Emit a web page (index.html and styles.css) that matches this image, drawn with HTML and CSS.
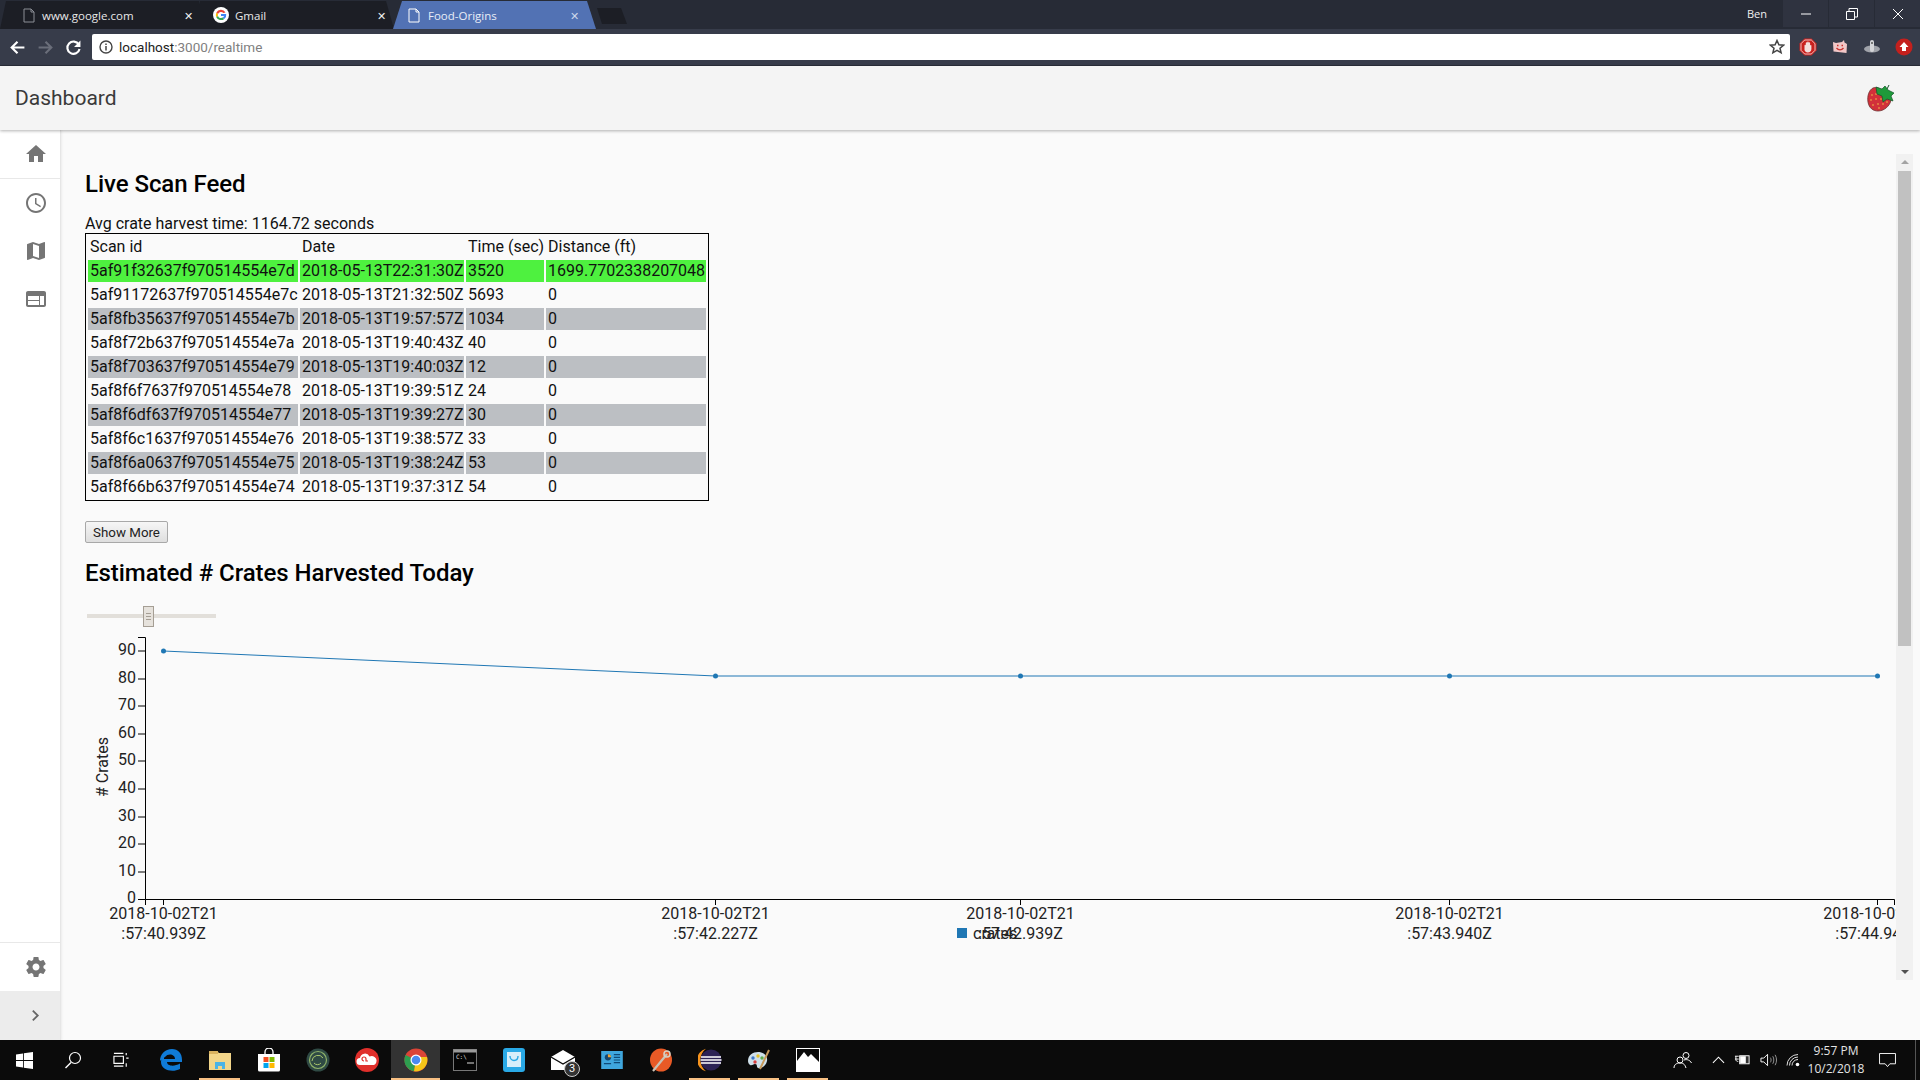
FILE: index.html
```html
<!DOCTYPE html>
<html lang="en">
<head>
  <meta charset="UTF-8">
  <title>Food-Origins</title>
  <link rel="stylesheet" href="styles.css">
</head>
<body>
  <div class="tabstrip">
    <div class="tab tab-first">
      <svg class="tab-icon" viewBox="0 0 12 15"><path d="M1 1h7l3 3v10H1zM8 1v3h3" fill="none" stroke="#8b8e96"/></svg>
      <span class="tab-title">www.google.com</span>
      <span class="tab-close">✕</span>
    </div>
    <div class="tab tab-gmail">
      <svg class="tab-icon-g" viewBox="0 0 16 16">
        <circle cx="8" cy="8" r="8" fill="#fff"/>
        <path d="M12.5 5.4A5.2 5.2 0 0 0 3.3 5.8L5 7.1a3.2 3.2 0 0 1 5.4-1z" fill="#ea4335"/>
        <path d="M3.3 5.8a5.2 5.2 0 0 0 0 4.4L5 8.9a3.2 3.2 0 0 1 0-1.8z" fill="#fbbc05"/>
        <path d="M3.3 10.2a5.2 5.2 0 0 0 8 1.7L9.7 10.600A3.200 3.200 0 0 1 5 8.900z" fill="#34a853"/>
        <path d="M13.200 7H8v2h3a2.500 2.500 0 0 1-1.300 1.600l1.600 1.300A5 5 0 0 0 13.200 7z" fill="#4285f4"/>
      </svg>
      <span class="tab-title">Gmail</span>
      <span class="tab-close">✕</span>
    </div>
    <div class="tab tab-active">
      <svg class="tab-icon" viewBox="0 0 12 15"><path d="M1 1h7l3 3v10H1zM8 1v3h3" fill="none" stroke="#fff"/></svg>
      <span class="tab-title">Food-Origins</span>
      <span class="tab-close">✕</span>
    </div>
    <div class="tab-new"></div>
    <div class="tabstrip-fill"></div>
    <span class="profile">Ben</span>
    <div class="winbtns">
      <div class="winbtn"><svg viewBox="0 0 12 12" width="12" height="12"><path d="M1 6h10" stroke="#fff"/></svg></div>
      <div class="winbtn"><svg viewBox="0 0 12 12" width="12" height="12"><path d="M.5 3.500h8v8h-8zM3 3.500V.5h8.500V9H8.500" fill="none" stroke="#fff"/></svg></div>
      <div class="winbtn"><svg viewBox="0 0 12 12" width="12" height="12"><path d="M1 1l10 10M11 1L1 11" stroke="#fff"/></svg></div>
    </div>
  </div>

  <div class="toolbar">
    <svg class="nav-icon" viewBox="0 0 16 16"><path d="M14.500 8H3M8 2.500L2.500 8 8 13.500" fill="none" stroke="#fff" stroke-width="2"/></svg>
    <svg class="nav-icon" viewBox="0 0 16 16"><path d="M1.500 8H13M8 2.500L13.500 8 8 13.500" fill="none" stroke="#6a6e7a" stroke-width="2"/></svg>
    <svg class="nav-icon" viewBox="0 0 16 16"><path d="M13 5.200A5.800 5.800 0 1 0 13.700 9.500" fill="none" stroke="#fff" stroke-width="2"/><path d="M14.500 1.500v6h-6z" fill="#fff"/></svg>
    <div class="urlbar">
      <svg class="info-icon" viewBox="0 0 14 14"><circle cx="7" cy="7" r="6" fill="none" stroke="#444" stroke-width="1.400"/><path d="M7 6v4.500M7 3.500v1.500" stroke="#444" stroke-width="1.500"/></svg>
      <span class="url-host">localhost</span><span class="url-rest">:3000/realtime</span>
      <svg class="star-icon" viewBox="0 0 16 16"><path d="M8 1.500l1.900 4.300 4.600.4-3.500 3 1.100 4.600L8 11.400l-4.100 2.400L5 9.200l-3.500-3 4.600-.4z" fill="none" stroke="#444" stroke-width="1.500"/></svg>
    </div>
    <div class="extensions">
      <svg class="ext" viewBox="0 0 18 18"><path d="M5.500.5h7L17.500 5.500v7L12.500 17.500h-7L.5 12.500v-7z" fill="#c9211e"/><path d="M5.700 2h6.600L16 5.700v6.600L12.300 16H5.700L2 12.300V5.700z" fill="none" stroke="#f6e4e2" stroke-width=".8"/><path d="M5.500 12V7.500c0-1 1.300-1 1.300 0V5c0-1 1.400-1 1.400 0v-.8c0-1 1.500-1 1.500 0V5c0-1 1.400-1 1.400 0v2.500c0-.8 1.300-.8 1.300 0V11c0 2-1.500 3.500-3.500 3.500H8.500C7 14.500 6 13.500 5.500 12z" fill="#f3dfdc"/></svg>
      <svg class="ext" viewBox="0 0 18 18"><path d="M2 4l3 1 6-1 2-2 .5 2.500L16 6l-.5 9-13-1.500z" fill="#f2c7c7"/><path d="M6 7.500h1.500M10.500 7.500H12M5.500 10c2 2.500 5 2.500 7 0" fill="none" stroke="#c9302c" stroke-width="1.300"/></svg>
      <svg class="ext" viewBox="0 0 18 18"><ellipse cx="9" cy="11" rx="8" ry="3.500" fill="#a0a3aa"/><rect x="7" y="2" width="4" height="12" rx="2" fill="#d4d5d8"/><circle cx="9" cy="5" r="1" fill="#555"/></svg>
      <svg class="ext" viewBox="0 0 18 18"><circle cx="9" cy="9" r="8.500" fill="#c4201d"/><path d="M9 4l4.500 5H11v4H7V9H4.500z" fill="#fff"/></svg>
    </div>
  </div>

  <header class="appbar">
    <h1>Dashboard</h1>
    <svg class="berry" viewBox="0 0 28 28">
      <path d="M6 4C2 6 0 12 1 18c1 6 5 9 10 9 6 0 12-5 13-11L14 6C11 3 8 3 6 4z" fill="#d2303a" stroke="#6a3030" stroke-width=".8"/>
      <g fill="#f2c14a">
        <circle cx="5" cy="11" r=".8"/><circle cx="9" cy="10" r=".8"/><circle cx="4" cy="16" r=".8"/><circle cx="9" cy="15" r=".8"/>
        <circle cx="14" cy="15" r=".8"/><circle cx="6" cy="21" r=".8"/><circle cx="11" cy="20" r=".8"/><circle cx="16" cy="20" r=".8"/><circle cx="12" cy="24" r=".8"/><circle cx="20" cy="18" r=".8"/>
      </g>
      <path d="M9 3l6 2 3-3 3 4 6 3-3 3 2 5-6-2-4 3-1-6-5-2z" fill="#1f9a3a" stroke="#14552a" stroke-width=".7"/>
      <path d="M20 5l2-4" stroke="#14552a" stroke-width="1"/>
    </svg>
  </header>

  <div class="main">
    <nav class="sidebar">
      <a class="side-item side-home">
        <svg viewBox="0 0 24 24"><path d="M10 20v-6h4v6h5v-8h3L12 3 2 12h3v8z"/></svg>
      </a>
      <a class="side-item">
        <svg viewBox="0 0 24 24"><path d="M11.990 2C6.470 2 2 6.480 2 12s4.470 10 9.990 10C17.520 22 22 17.520 22 12S17.520 2 11.990 2zM12 20c-4.420 0-8-3.580-8-8s3.580-8 8-8 8 3.580 8 8-3.580 8-8 8zm.5-13H11v6l5.250 3.150.75-1.230-4.500-2.670z"/></svg>
      </a>
      <a class="side-item">
        <svg viewBox="0 0 24 24"><path d="M20.500 3l-.16.03L15 5.100 9 3 3.360 4.900c-.21.07-.36.25-.36.48V20.500c0 .28.22.5.5.5l.16-.03L9 18.900l6 2.100 5.640-1.900c.21-.07.36-.25.36-.48V3.500c0-.28-.22-.5-.5-.5zM15 19l-6-2.110V5l6 2.110V19z"/></svg>
      </a>
      <a class="side-item">
        <svg viewBox="0 0 24 24"><path d="M20 4H4c-1.100 0-2 .9-2 2v12c0 1.100.9 2 2 2h16c1.100 0 2-.9 2-2V6c0-1.100-.9-2-2-2zm-5 14H4v-4h11v4zm0-5H4V9h11v4zm5 5h-4V9h4v9z"/></svg>
      </a>
      <div class="side-fill"></div>
      <a class="side-item side-gear">
        <svg viewBox="0 0 24 24"><path d="M19.430 12.980c.04-.32.07-.64.07-.98s-.03-.66-.07-.98l2.110-1.650c.19-.15.24-.42.12-.64l-2-3.460c-.12-.22-.39-.3-.61-.22l-2.490 1c-.52-.4-1.080-.73-1.690-.98l-.38-2.650C14.460 2.180 14.250 2 14 2h-4c-.25 0-.46.18-.49.42l-.38 2.650c-.61.25-1.170.59-1.690.98l-2.490-1c-.23-.09-.49 0-.61.22l-2 3.460c-.13.22-.07.49.12.64l2.110 1.650c-.04.32-.07.65-.07.98s.03.66.07.98l-2.110 1.650c-.19.15-.24.42-.12.64l2 3.460c.12.22.39.3.61.22l2.490-1c.52.4 1.080.73 1.690.98l.38 2.650c.03.24.24.42.49.42h4c.25 0 .46-.18.49-.42l.38-2.650c.61-.25 1.170-.59 1.690-.98l2.490 1c.23.09.49 0 .61-.22l2-3.460c.12-.22.07-.49-.12-.64l-2.110-1.650zM12 15.500c-1.930 0-3.500-1.570-3.500-3.500s1.570-3.500 3.500-3.500 3.500 1.570 3.500 3.500-1.570 3.500-3.500 3.500z"/></svg>
      </a>
      <a class="side-expand">
        <svg viewBox="0 0 10 14" width="9" height="13"><path d="M2 1.500L7.500 7 2 12.500" fill="none" stroke="#666" stroke-width="2"/></svg>
      </a>
    </nav>

    <section class="content">
      <div class="scroller">
        <div class="page">
          <h2 class="title-feed">Live Scan Feed</h2>
          <p class="avg">Avg crate harvest time: 1164.72 seconds</p>
          <table class="scans">
            <colgroup>
              <col class="col-id"><col class="col-date"><col class="col-time"><col class="col-dist">
            </colgroup>
            <thead>
              <tr><th>Scan id</th><th>Date</th><th>Time (sec)</th><th>Distance (ft)</th></tr>
            </thead>
            <tbody>
              <tr class="latest"><td>5af91f32637f970514554e7d</td><td>2018-05-13T22:31:30Z</td><td>3520</td><td>1699.7702338207048</td></tr>
              <tr><td>5af91172637f970514554e7c</td><td>2018-05-13T21:32:50Z</td><td>5693</td><td>0</td></tr>
              <tr class="odd"><td>5af8fb35637f970514554e7b</td><td>2018-05-13T19:57:57Z</td><td>1034</td><td>0</td></tr>
              <tr><td>5af8f72b637f970514554e7a</td><td>2018-05-13T19:40:43Z</td><td>40</td><td>0</td></tr>
              <tr class="odd"><td>5af8f703637f970514554e79</td><td>2018-05-13T19:40:03Z</td><td>12</td><td>0</td></tr>
              <tr><td>5af8f6f7637f970514554e78</td><td>2018-05-13T19:39:51Z</td><td>24</td><td>0</td></tr>
              <tr class="odd"><td>5af8f6df637f970514554e77</td><td>2018-05-13T19:39:27Z</td><td>30</td><td>0</td></tr>
              <tr><td>5af8f6c1637f970514554e76</td><td>2018-05-13T19:38:57Z</td><td>33</td><td>0</td></tr>
              <tr class="odd"><td>5af8f6a0637f970514554e75</td><td>2018-05-13T19:38:24Z</td><td>53</td><td>0</td></tr>
              <tr><td>5af8f66b637f970514554e74</td><td>2018-05-13T19:37:31Z</td><td>54</td><td>0</td></tr>
            </tbody>
          </table>
          <button class="show-more">Show More</button>
          <h2 class="title-crates">Estimated # Crates Harvested Today</h2>
          <div class="slider">
            <div class="slider-handle"><span></span><span></span><span></span></div>
          </div>
          <!-- svg origin is page x 85, y 630 -->
          <svg class="chart" width="1811" height="320" viewBox="85 630 1811 320">
            <g class="axis">
              <path d="M138 636.500H145.500V898.500H138M145.500 904V898.500H1894.500V904" fill="none"/>
              <path d="M138 650H145M138 678H145M138 705H145M138 733H145M138 760H145M138 788H145M138 816H145M138 843H145M138 871H145"/>
              <path d="M163.500 898V904M715.500 898V904M1020.500 898V904M1449.500 898V904M1877.500 898V904"/>
            </g>
            <g class="y-labels">
              <text x="136" y="653.500">90</text>
              <text x="136" y="681.500">80</text>
              <text x="136" y="708.500">70</text>
              <text x="136" y="736.500">60</text>
              <text x="136" y="763.500">50</text>
              <text x="136" y="791.500">40</text>
              <text x="136" y="819.500">30</text>
              <text x="136" y="846.500">20</text>
              <text x="136" y="874.500">10</text>
              <text x="136" y="901.500">0</text>
            </g>
            <text class="y-title" transform="translate(108 766) rotate(-90)"># Crates</text>
            <g class="x-labels">
              <text x="163.500" y="918">2018-10-02T21</text><text x="163.500" y="938">:57:40.939Z</text>
              <text x="715.500" y="918">2018-10-02T21</text><text x="715.500" y="938">:57:42.227Z</text>
              <text x="1020.500" y="918">2018-10-02T21</text><text x="1020.500" y="938">:57:42.939Z</text>
              <text x="1449.500" y="918">2018-10-02T21</text><text x="1449.500" y="938">:57:43.940Z</text>
              <text x="1877.500" y="918">2018-10-02T21</text><text x="1877.500" y="938">:57:44.940Z</text>
            </g>
            <path class="line" d="M163.500 650L715.500 675H1877.500"/>
            <g class="dots">
              <circle cx="163.500" cy="650" r="2.500"/><circle cx="715.500" cy="675" r="2.500"/><circle cx="1020.500" cy="675" r="2.500"/>
              <circle cx="1449.500" cy="675" r="2.500"/><circle cx="1877.500" cy="675" r="2.500"/>
            </g>
            <rect class="legend-key" x="957" y="927" width="10" height="10"/>
            <text class="legend-label" x="973" y="938">crates</text>
          </svg>
        </div>
      </div>
      <div class="scrollbar">
        <div class="sb-up"></div>
        <div class="sb-thumb"></div>
        <div class="sb-down"></div>
      </div>
    </section>
  </div>

  <footer class="taskbar">
    <div class="task task-plain">
      <svg viewBox="0 0 18 18" width="17" height="17"><path d="M0 2.600L7.400 1.500v7H0zM8.300 1.400L18 0v8.500H8.300zM0 9.400h7.400v7L0 15.400zM8.300 9.400H18V18l-9.700-1.400z" fill="#fff"/></svg>
    </div>
    <div class="task">
      <svg viewBox="0 0 18 18" width="18" height="18"><circle cx="11" cy="7" r="5.500" fill="none" stroke="#fff" stroke-width="1.200"/><path d="M7 11.500L1.500 17" stroke="#fff" stroke-width="1.400"/></svg>
    </div>
    <div class="task">
      <svg viewBox="0 0 18 18" width="17" height="17"><path d="M1 4.500h10V12H1zM1 1.500h10M1 15h10M14 1v2.500M14 6.500h2.500M14 12v3.500" fill="none" stroke="#fff" stroke-width="1.200"/></svg>
    </div>
    <div class="task">
      <svg viewBox="0 0 24 24"><path d="M1 13C1 6 6 1 13 1c6 0 10 4 10 11v2H8c0 4 7 5 13 1.500V21c-8 4-19 1-19-7 0-3 1-5 4-7-1 2-1 3-1 4h11c0-5-7-6-10-2-2 1-4 3-5 4z" fill="#0f7bd8"/></svg>
    </div>
    <div class="task task-open">
      <svg viewBox="0 0 24 24"><path d="M1 3h8l2 2h12v17H1z" fill="#f2d589"/><path d="M1 3h9v3H1z" fill="#d9b25f"/><path d="M7 21v-7h10v7h-3v-3h-4v3z" fill="#4bb3e6"/></svg>
    </div>
    <div class="task">
      <svg viewBox="0 0 24 24"><path d="M8 6V4a4 4 0 0 1 8 0v2" fill="none" stroke="#fff" stroke-width="1.300"/><path d="M1 6h22v16a1.500 1.500 0 0 1-1.500 1.500h-19A1.500 1.500 0 0 1 1 22z" fill="#fff"/><path d="M6.500 9H11.500v5H6.500z" fill="#f25022"/><path d="M12.500 9h5v5h-5z" fill="#7fba00"/><path d="M6.500 15H11.500v5H6.500z" fill="#00a4ef"/><path d="M12.500 15h5v5h-5z" fill="#ffb900"/></svg>
    </div>
    <div class="task">
      <svg viewBox="0 0 24 24"><circle cx="12" cy="12" r="11.500" fill="#2f4a44"/><circle cx="12" cy="12" r="8.500" fill="none" stroke="#8fb26a" stroke-width="1.200"/><path d="M6 13a6 6 0 0 1 11-3M8 15a4.500 4.500 0 0 0 7 0" fill="none" stroke="#a9c56c"/></svg>
    </div>
    <div class="task">
      <svg viewBox="0 0 24 24"><circle cx="12" cy="12" r="12" fill="#e02f2b"/><path d="M5 17a3.500 3.500 0 0 1 0-7 5 5 0 0 1 9.500-1.500A4.500 4.500 0 0 1 19 17z" fill="#fff"/><path d="M9 13a2 2 0 1 1 2-2v2h2" fill="none" stroke="#e02f2b" stroke-width="1.200"/></svg>
    </div>
    <div class="task task-open task-current">
      <svg viewBox="0 0 24 24">
        <circle cx="12" cy="12" r="11.500" fill="#db4437"/>
        <path d="M12 12L1.500 7A11.500 11.500 0 0 0 10 23.300z" fill="#2e9e4f"/>
        <path d="M12 12L10 23.300A11.500 11.500 0 0 0 23 9H12z" fill="#f5c518"/>
        <circle cx="12" cy="12" r="5.500" fill="#fff"/><circle cx="12" cy="12" r="4.300" fill="#4a8af0"/>
      </svg>
    </div>
    <div class="task">
      <svg viewBox="0 0 24 24"><rect x=".5" y="1.500" width="23" height="21" fill="#050505" stroke="#777"/><rect x=".5" y="1.500" width="23" height="3" fill="#9a9a9a"/><text class="console-text" x="3" y="11">C:\</text><path d="M14 15h7" stroke="#ddd"/></svg>
    </div>
    <div class="task">
      <svg viewBox="0 0 24 24"><rect x="1" y="0" width="22" height="24" rx="3" fill="#29a9e6"/><rect x="5" y="4" width="14" height="15" fill="#d6eefa"/><path d="M8 8c0 6 8 6 8 0" fill="none" stroke="#29a9e6" stroke-width="1.400"/></svg>
    </div>
    <div class="task">
      <svg viewBox="0 0 24 24"><path d="M0 9L12 2l12 7v13H0z" fill="#fff"/><path d="M0 9l12 7 12-7" fill="none" stroke="#0a0a0a" stroke-width="1.300"/></svg>
      <span class="task-badge">3</span>
    </div>
    <div class="task">
      <svg viewBox="0 0 24 20" width="22" height="18"><rect width="24" height="20" fill="#3fa6dd"/><circle cx="7.500" cy="7" r="3.500" fill="#16466e"/><path d="M7.500 7V3.500A3.500 3.500 0 0 1 11 7z" fill="#f2a530"/><path d="M14 4h7M14 7h7M14 10h7M14 13h7M3 14h8" stroke="#0f4a78" stroke-width="1.300"/></svg>
    </div>
    <div class="task">
      <svg viewBox="0 0 24 24"><ellipse cx="12" cy="12" rx="11" ry="11.500" fill="#e95a26"/><path d="M4 23L18 6" stroke="#c9c2b5" stroke-width="2.200"/><circle cx="18" cy="6" r="3" fill="none" stroke="#d7d0c4" stroke-width="1.600"/></svg>
    </div>
    <div class="task task-open">
      <svg viewBox="0 0 24 24"><path d="M8 .8A11.500 11.500 0 0 0 8 23.200 14 14 0 0 1 8 .8z" fill="#f7941e"/><circle cx="13" cy="12" r="10.500" fill="#2c2255"/><path d="M3 9h20M2.500 12h21M3 15h20" stroke="#fff" stroke-width="1.300"/></svg>
    </div>
    <div class="task task-open">
      <svg viewBox="0 0 24 24"><path d="M1 13C1 7 6 4 11 4s10 3 9 9c-1 5-6 8-9 7-2-1 0-4-3-4-2 0-3 2-5 1-1-1-2-2-2-4z" fill="#cfe0ea"/><circle cx="6" cy="10" r="1.700" fill="#3f78c9"/><circle cx="11" cy="8" r="1.700" fill="#e6c229"/><circle cx="15" cy="10" r="1.700" fill="#5fae4e"/><circle cx="8" cy="14" r="1.700" fill="#d83f3f"/><path d="M13 21L22 2" stroke="#c89a5b" stroke-width="2"/></svg>
    </div>
    <div class="task task-open">
      <svg viewBox="0 0 24 24"><rect x=".5" y=".5" width="23" height="23" fill="#0a0a0a" stroke="#fff"/><path d="M1 23V13L8 4l4 5 3-3 8 8v9z" fill="#fff"/></svg>
    </div>
    <div class="tray">
      <svg class="tray-people" viewBox="0 0 20 18" width="20" height="18"><circle cx="13" cy="4.500" r="3" fill="none" stroke="#fff"/><circle cx="7" cy="9" r="3" fill="none" stroke="#fff"/><path d="M1 17c0-3 2-5 6-5s5 2 6 5M11 9c3-1 6 0 7.500 3" fill="none" stroke="#fff"/></svg>
      <svg class="tray-icon" viewBox="0 0 14 8" width="13" height="8"><path d="M1 7l6-6 6 6" fill="none" stroke="#fff" stroke-width="1.100"/></svg>
      <svg class="tray-icon" viewBox="0 0 18 12" width="17" height="12"><path d="M1 2h4M1 5h4M2 2v3.500c0 1.500 1 2 2.500 2" fill="none" stroke="#fff"/><rect x="6" y="1.500" width="10" height="8.500" fill="#333" stroke="#fff"/><rect x="6.500" y="2" width="6" height="7.500" fill="#fff"/></svg>
      <svg class="tray-icon" viewBox="0 0 18 14" width="17" height="14"><path d="M1 5h3l4-4v12l-4-4H1z" fill="none" stroke="#fff"/><path d="M11 4.500c1 1.500 1 3.500 0 5M13.500 3c1.500 2.500 1.500 5.500 0 8M16 1.500c2 3.500 2 7.500 0 11" fill="none" stroke="#999"/></svg>
      <svg class="tray-icon" viewBox="0 0 14 14" width="14" height="14"><path d="M1 12.500A11 11 0 0 1 12 1.500M3.500 12.500A8.500 8.500 0 0 1 12 4M6 12.500a6 6 0 0 1 6-6" fill="none" stroke="#ddd"/><circle cx="11.500" cy="11.500" r="1.800" fill="#fff"/></svg>
      <div class="clock"><span>9:57 PM</span><span>10/2/2018</span></div>
      <svg class="tray-action" viewBox="0 0 18 16" width="17" height="15"><path d="M.5.5h17v11h-6l-2.500 3-2.500-3h-6z" fill="none" stroke="#fff"/></svg>
      <div class="show-desktop"></div>
    </div>
  </footer>
</body>
</html>
```

FILE: styles.css
```css
html, body {
  margin: 0;
  padding: 0;
  height: 100%;
}

body {
  width: 1920px;
  height: 1080px;
  display: flex;
  flex-direction: column;
  overflow: hidden;
  font-family: Roboto, Arial, sans-serif;
  background: #fafafa;
  color: #111;
}

/* browser chrome */
.tabstrip {
  height: 29px;
  display: flex;
  align-items: stretch;
  background: #272b36;
  flex-shrink: 0;
}

.tab {
  display: flex;
  align-items: center;
  color: #e8e8e8;
  font-size: 11.500px;
  font-family: "Open Sans", Arial, sans-serif;
  background: #1c1e25;
  margin-top: 1px;
  box-sizing: border-box;
}

.tab-first {
  width: 207px;
  padding: 0 12px 0 23px;
  clip-path: polygon(0 100%, 6px 0, 199px 0, 207px 100%);
}

.tab-gmail {
  width: 194px;
  margin-left: -7px;
  padding: 0 6px 0 13px;
  clip-path: polygon(0 100%, 0 0, 186px 0, 194px 100%);
}

.tab-active {
  width: 203px;
  margin-left: -1px;
  padding: 0 15px 0 15px;
  background: #5272b4;
  color: #e8edf7;
  clip-path: polygon(0 100%, 9px 0, 194px 0, 203px 100%);
}

.tab-icon {
  width: 12px;
  height: 15px;
  margin-right: 7px;
}

.tab-active .tab-icon {
  margin-right: 8px;
}

.tab-icon-g {
  width: 16px;
  height: 16px;
  margin-right: 6px;
}

.tab-title {
  flex-grow: 1;
}

.tab-close {
  font-size: 11px;
  color: #eee;
  width: 11px;
}

.tab-active .tab-close {
  color: #ccd6ea;
}

.tab-new {
  width: 30px;
  height: 16px;
  margin: 8px 0 0 1px;
  background: #1c1e25;
  clip-path: polygon(0 0, 24px 0, 30px 100%, 5px 100%);
}

.tabstrip-fill {
  flex-grow: 1;
}

.profile {
  font-family: "Open Sans", Arial, sans-serif;
  font-size: 11px;
  color: #f0f0f0;
  line-height: 28px;
  margin-right: 16px;
}

.winbtns {
  display: flex;
  height: 27px;
  gap: 1px;
}

.winbtn {
  width: 45px;
  display: flex;
  align-items: center;
  justify-content: center;
  background: #2f3340;
}

.toolbar {
  height: 36px;
  display: flex;
  align-items: center;
  background: #373c4a;
  flex-shrink: 0;
  padding-left: 9px;
  border-bottom: 1px solid #2a2e39;
}

.nav-icon {
  width: 17px;
  height: 17px;
  margin-right: 11px;
}

.urlbar {
  width: 1698px;
  height: 26px;
  margin-left: -1px;
  display: flex;
  align-items: center;
  background: #fff;
  border-radius: 2px;
  font-size: 13.500px;
  box-sizing: border-box;
  padding-left: 7px;
}

.info-icon {
  width: 14px;
  height: 14px;
  margin-right: 6px;
}

.url-host {
  color: #222;
}

.url-rest {
  color: #808080;
}

.star-icon {
  width: 16px;
  height: 16px;
  margin-left: auto;
  margin-right: 5px;
}

.extensions {
  display: flex;
  align-items: center;
  gap: 14px;
  margin-left: 9px;
}

.ext {
  width: 18px;
  height: 18px;
}

/* app header */
.appbar {
  height: 64px;
  flex-shrink: 0;
  display: flex;
  align-items: center;
  justify-content: space-between;
  background: #f4f4f4;
  box-shadow: 0 1px 3px rgba(0, 0, 0, 0.3);
  padding: 0 25px 0 15px;
  position: relative;
  z-index: 2;
}

.appbar h1 {
  margin: 0;
  font-size: 21px;
  font-weight: 400;
  color: #3a3a3a;
}

.berry {
  width: 28px;
  height: 28px;
}

/* sidebar */
.main {
  flex-grow: 1;
  display: flex;
  min-height: 0;
}

.sidebar {
  width: 61px;
  flex-shrink: 0;
  display: flex;
  flex-direction: column;
  background: #fff;
  border-right: 1px solid #e6e6e6;
  box-shadow: 1px 0 2px rgba(0, 0, 0, 0.06);
  box-sizing: border-box;
}

.side-item {
  height: 48px;
  flex-shrink: 0;
  display: flex;
  align-items: center;
  justify-content: center;
  padding-left: 11px;
  box-sizing: border-box;
}

.side-item svg {
  width: 24px;
  height: 24px;
  fill: #757575;
}

.side-home {
  height: 49px;
  border-bottom: 1px solid #e8e8e8;
}

.side-fill {
  flex-grow: 1;
}

.side-gear {
  height: 49px;
  border-top: 1px solid #e8e8e8;
}

.side-expand {
  height: 49px;
  flex-shrink: 0;
  display: flex;
  align-items: center;
  justify-content: center;
  padding-left: 11px;
  box-sizing: border-box;
  background: #ececec;
}

/* content */
.content {
  flex-grow: 1;
  display: flex;
  align-items: flex-start;
  padding-top: 24px;
}

.scroller {
  width: 1835px;
  height: 826px;
  overflow: hidden;
}

.page {
  padding-left: 24px;
  padding-top: 16px;
}

.title-feed, .title-crates {
  margin: 0;
  font-size: 24px;
  font-weight: 500;
  line-height: 28px;
  letter-spacing: -0.05px;
  color: #000;
}

.avg {
  margin: 16px 0 0;
  font-size: 16px;
  line-height: 19px;
}

.scans {
  table-layout: fixed;
  width: 624px;
  border: 1px solid #000;
  border-spacing: 2px;
  font-size: 16px;
  line-height: 20px;
}

.col-id { width: 210px; }
.col-date { width: 164px; }
.col-time { width: 78px; }
.col-dist { width: 160px; }

.scans th, .scans td {
  padding: 1px 2px;
  text-align: left;
  font-weight: 400;
  white-space: nowrap;
}

.scans .latest td {
  background: #4ef13f;
}

.scans .odd td {
  background: #bcbfc3;
}

.show-more {
  display: block;
  margin-top: 20px;
  width: 83px;
  height: 22px;
  padding: 0;
  font-family: Roboto, Arial, sans-serif;
  font-size: 13.333px;
  color: #222;
  background: linear-gradient(#f6f6f6, #dedede);
  border: 1px solid #a8a8a8;
  border-radius: 2px;
}

.title-crates {
  margin-top: 16px;
}

.slider {
  position: relative;
  width: 129px;
  height: 4px;
  margin: 27px 0 0 2px;
  background: #e2dfda;
}

.slider-handle {
  position: absolute;
  left: 56px;
  top: -8px;
  width: 11px;
  height: 21px;
  box-sizing: border-box;
  background: #e6e2dc;
  border: 1px solid #a59e94;
  display: flex;
  flex-direction: column;
  justify-content: center;
  align-items: center;
  gap: 2px;
}

.slider-handle span {
  width: 5px;
  height: 1px;
  background: #a59e94;
}

.chart {
  display: block;
  margin-top: 13px;
  font-size: 16px;
}

.axis path {
  stroke: #000;
  stroke-width: 1;
}

.chart text {
  fill: #222;
}

.y-labels text {
  text-anchor: end;
}

.y-title {
  text-anchor: middle;
}

.x-labels text {
  text-anchor: middle;
}

.line {
  fill: none;
  stroke: #1f77b4;
  stroke-width: 1;
}

.dots circle, .legend-key {
  fill: #1f77b4;
}

/* fake scrollbar */
.scrollbar {
  width: 17px;
  height: 826px;
  background: #f1f1f1;
  display: flex;
  flex-direction: column;
  align-items: center;
}

.sb-up, .sb-down {
  width: 0;
  height: 0;
  border-left: 4px solid transparent;
  border-right: 4px solid transparent;
}

.sb-up {
  margin-top: 6px;
  border-bottom: 4px solid #a3a3a3;
}

.sb-thumb {
  width: 13px;
  height: 475px;
  margin-top: 7px;
  background: #c1c1c1;
}

.sb-down {
  margin-top: auto;
  margin-bottom: 6px;
  border-top: 4px solid #505050;
}

/* windows taskbar */
.taskbar {
  height: 40px;
  flex-shrink: 0;
  display: flex;
  align-items: stretch;
  background: #0b0b0b;
}

.task {
  width: 49px;
  flex-shrink: 0;
  position: relative;
  display: flex;
  align-items: center;
  justify-content: center;
  box-sizing: border-box;
}

.task-plain {
  width: 48px;
}

.task svg {
  max-width: 24px;
}

.task > svg:not([width]) {
  width: 24px;
  height: 24px;
}

.task-open::after {
  content: "";
  position: absolute;
  left: 4px;
  right: 4px;
  bottom: 0;
  height: 2px;
  background: #f9c184;
}

.task-current {
  background: #333;
}

.task-current::after {
  left: 0;
  right: 0;
}

.task-badge {
  position: absolute;
  right: 7px;
  bottom: 3px;
  width: 16px;
  height: 16px;
  border-radius: 50%;
  background: #333;
  border: 1px solid #ccc;
  box-sizing: border-box;
  color: #fff;
  font-size: 11px;
  line-height: 14px;
  text-align: center;
}

.console-text {
  font-family: "DejaVu Sans Mono", monospace;
  font-size: 6px;
  fill: #ddd;
}

.tray {
  margin-left: auto;
  display: flex;
  align-items: center;
  color: #e4e4e4;
}

.tray-icon {
  margin-left: 9px;
}

.tray-people + .tray-icon {
  margin-left: 19px;
}

.clock {
  width: 72px;
  display: flex;
  flex-direction: column;
  align-items: center;
  font-size: 12px;
  font-family: "Open Sans", Arial, sans-serif;
  line-height: 18px;
}

.tray-action {
  margin: 0 19px 0 7px;
}

.show-desktop {
  width: 5px;
  height: 100%;
  box-sizing: border-box;
  border-left: 1px solid #555;
}
```
